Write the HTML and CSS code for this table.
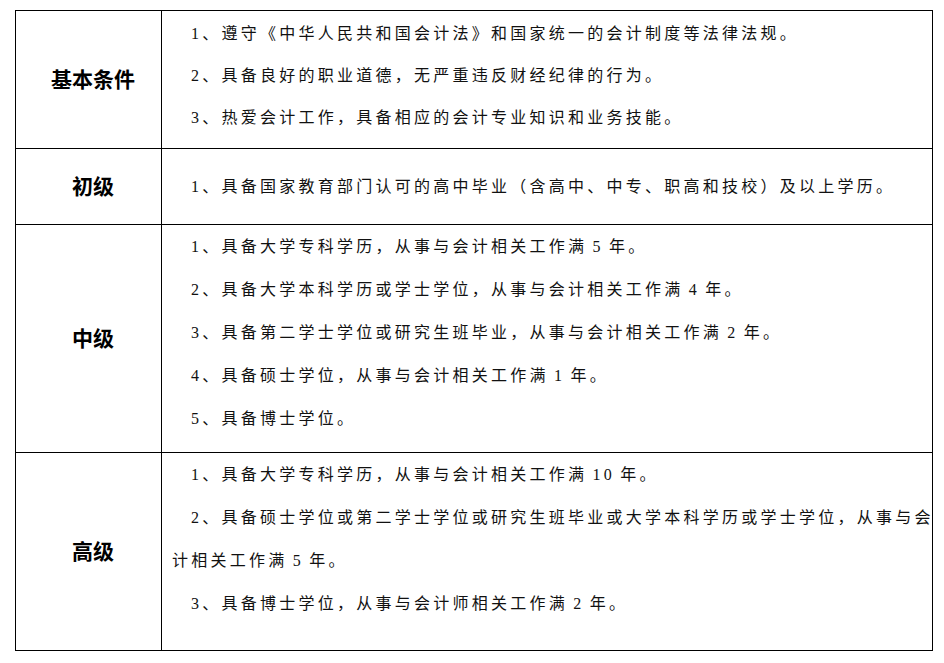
FILE: index.html
```html
<!DOCTYPE html>
<html lang="zh-CN">
<head>
<meta charset="utf-8">
<title>会计专业技术资格报名条件</title>
<link rel="stylesheet" href="styles.css">
</head>
<body>
<div class="table">
  <div class="label row-basic">基本条件</div>
  <div class="content row-basic tight">
    <p>1、遵守《中华人民共和国会计法》和国家统一的会计制度等法律法规。</p>
    <p>2、具备良好的职业道德，无严重违反财经纪律的行为。</p>
    <p>3、热爱会计工作，具备相应的会计专业知识和业务技能。</p>
  </div>

  <div class="label row-junior">初级</div>
  <div class="content row-junior middle">
    <p>1、具备国家教育部门认可的高中毕业（含高中、中专、职高和技校）及以上学历。</p>
  </div>

  <div class="label row-mid">中级</div>
  <div class="content row-mid">
    <p>1、具备大学专科学历，从事与会计相关工作满 5 年。</p>
    <p>2、具备大学本科学历或学士学位，从事与会计相关工作满 4 年。</p>
    <p>3、具备第二学士学位或研究生班毕业，从事与会计相关工作满 2 年。</p>
    <p>4、具备硕士学位，从事与会计相关工作满 1 年。</p>
    <p>5、具备博士学位。</p>
  </div>

  <div class="label row-senior">高级</div>
  <div class="content row-senior">
    <p>1、具备大学专科学历，从事与会计相关工作满 10 年。</p>
    <p>2、具备硕士学位或第二学士学位或研究生班毕业或大学本科学历或学士学位，从事与会计相关工作满 5 年。</p>
    <p>3、具备博士学位，从事与会计师相关工作满 2 年。</p>
  </div>
</div>
</body>
</html>
```

FILE: styles.css
```css
html, body {
  margin: 0;
  padding: 0;
  background: #ffffff;
}

body {
  font-family: "Liberation Serif", "Noto Sans CJK SC", serif;
  color: #000000;
}

.table {
  display: grid;
  grid-template-columns: 146px 771px;
  grid-template-rows: 138px 76px 228px 198px;
  width: 918px;
  margin: 10px 0 0 15px;
  border-top: 1px solid #000;
  border-left: 1px solid #000;
  box-sizing: border-box;
}

.label,
.content {
  border-right: 1px solid #000;
  border-bottom: 1px solid #000;
  box-sizing: border-box;
}

.label {
  display: flex;
  align-items: center;
  justify-content: center;
  padding: 0 0 4px 9px;
  font-family: "Noto Sans CJK SC", sans-serif;
  font-weight: 700;
  font-size: 21px;
  color: #000;
}

.content {
  padding: 0 0 0 10px;
  font-size: 16px;
  letter-spacing: 3.25px;
  word-spacing: -2px;
  color: #111;
}

.content p {
  margin: 0 -8px 0 0;
  line-height: 43px;
  text-indent: 19px;
}

.content.tight {
  padding-top: 2px;
}

.content.tight p {
  line-height: 42px;
}

.content.middle {
  display: flex;
  flex-direction: column;
  justify-content: center;
}
```
